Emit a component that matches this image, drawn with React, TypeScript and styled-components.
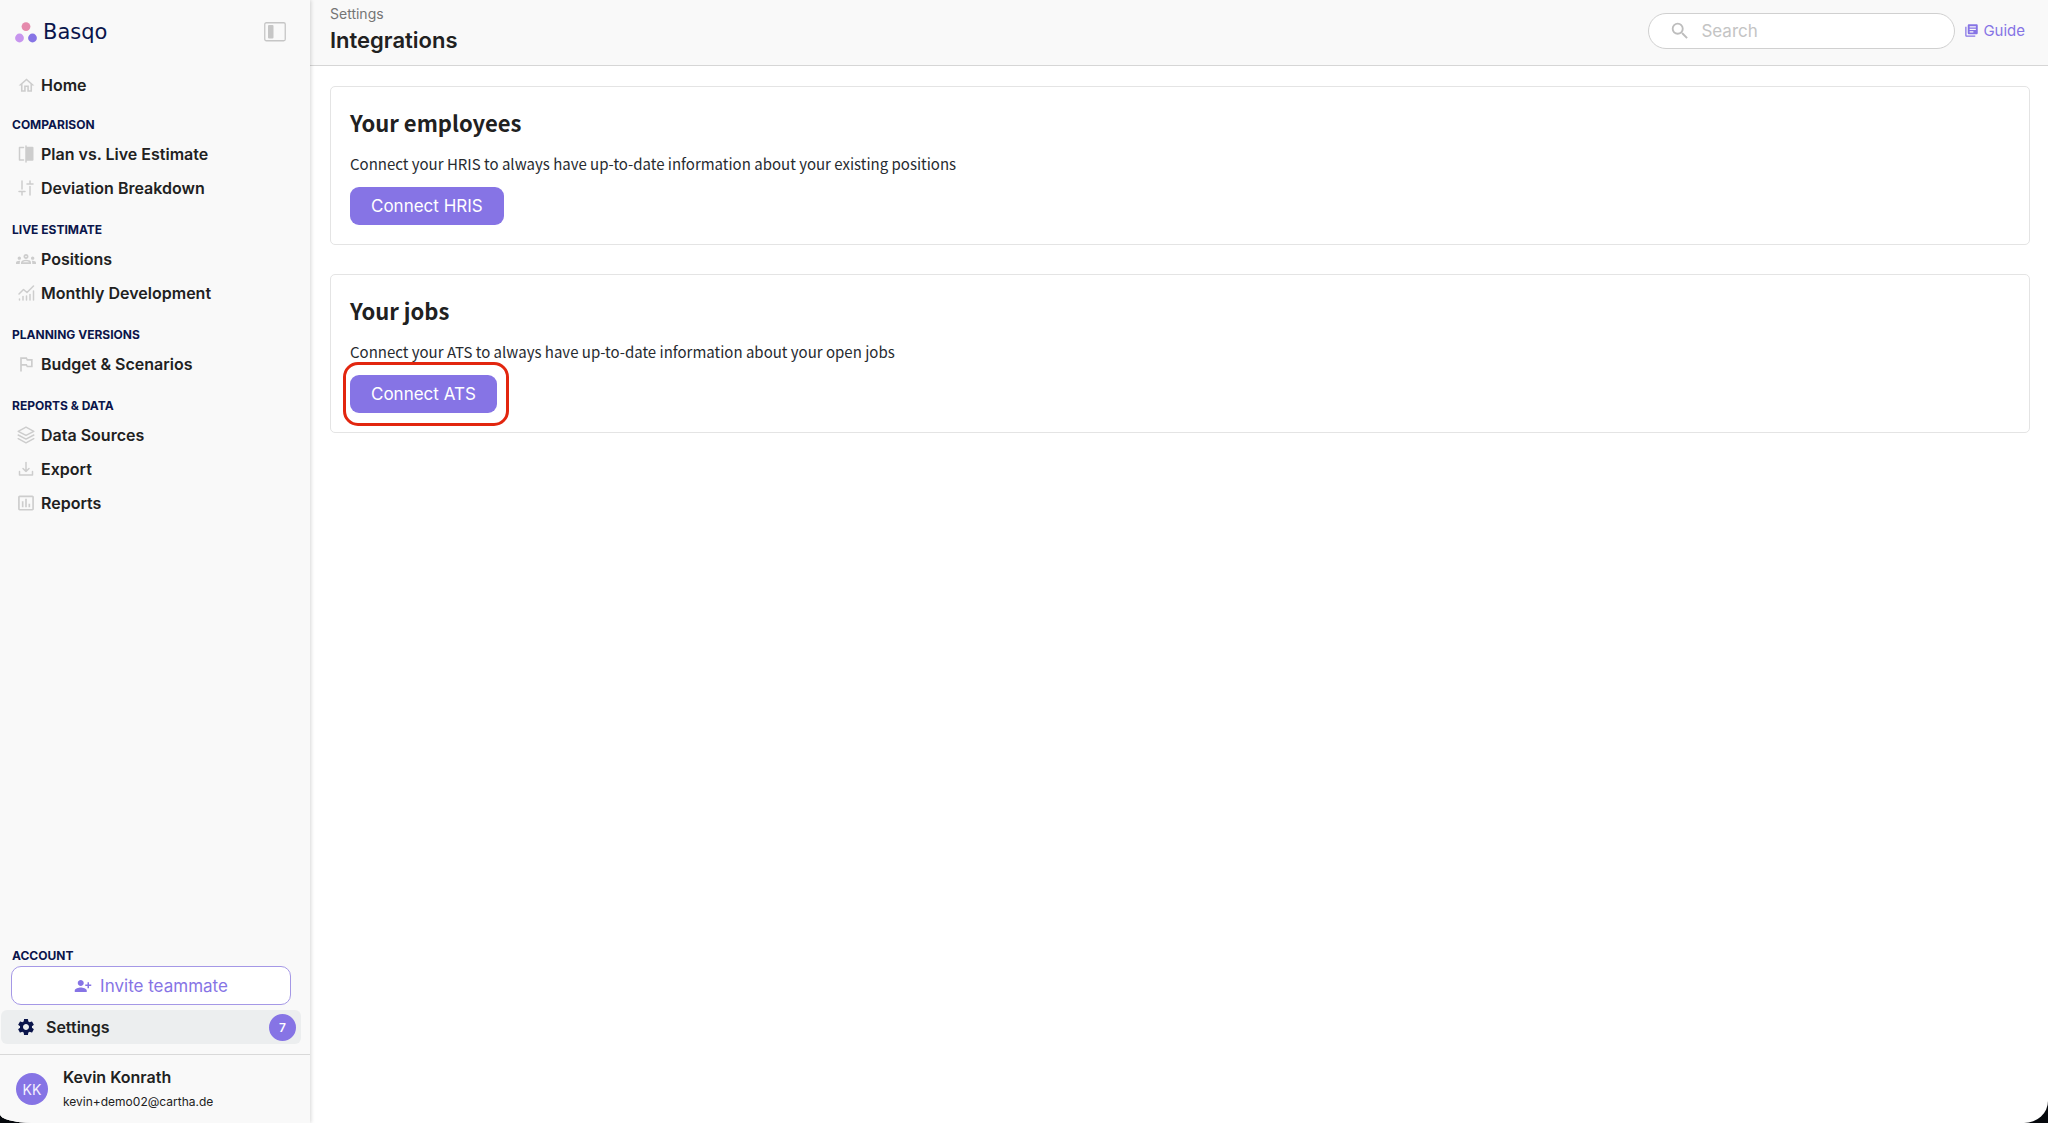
import React from 'react';
import styled, { createGlobalStyle } from 'styled-components';
import {
  MdInsertChartOutlined,
  MdLibraryBooks,
  MdOutlineGroups,
  MdOutlineHome,
  MdOutlinedFlag,
  MdPersonAddAlt1,
  MdSearch,
  MdSettings,
} from 'react-icons/md';

const GlobalStyle = createGlobalStyle`
  *, *::before, *::after { box-sizing: border-box; }
  body {
    margin: 0;
    background: #05080c;
    color: #212121;
    font-family: Inter, "Liberation Sans", sans-serif;
    font-size: 16px;
  }
  h1, h2, p, ul { margin: 0; padding: 0; }
  ul { list-style: none; }
  button, input { font: inherit; }
  a { color: inherit; text-decoration: none; }
`;

const Shell = styled.div`
  display: grid;
  grid-template-columns: 310px 1fr;
  min-height: 100vh;
  background: #fff;
  border-radius: 0 0 24px 32px / 0 0 22px 9px;
  overflow: hidden;
`;

const Sidebar = styled.aside`
  display: flex;
  flex-direction: column;
  background: #f9f9f9;
  box-shadow: 1px 0 4px rgba(0, 0, 0, 0.16);
  z-index: 1;
`;

const Brand = styled.div`
  display: flex;
  align-items: center;
  justify-content: space-between;
  height: 64px;
  padding: 0 24px 0 15px;
`;

const Logo = styled.a`
  display: flex;
  align-items: center;
  gap: 6px;
  color: #0b154b;
  font: 21px/24px "DejaVu Sans", sans-serif;
`;

const IconButton = styled.button`
  display: flex;
  padding: 0;
  border: 0;
  background: none;
  cursor: pointer;
`;

const Nav = styled.nav`
  flex: 1;
  padding-top: 4px;
`;

const Group = styled.section`
  padding-top: 15px;
  &:first-of-type { padding-top: 13px; }
`;

const GroupTitle = styled.h2`
  padding: 0 0 2px 12px;
  color: #0b154b;
  font-size: 12px;
  font-weight: 700;
  line-height: 20px;
`;

const NavLink = styled.a`
  display: flex;
  align-items: center;
  gap: 5px;
  height: 34px;
  padding-left: 16px;
  font-weight: 600;
`;

const NavIcon = styled.span`
  display: flex;
  justify-content: center;
  width: 20px;
  color: #cdcdcd;
  svg { flex: none; }
`;

const Account = styled.section`
  padding: 0 9px 10px 1px;
`;

const AccountTitle = styled(GroupTitle)`
  padding: 0 0 0 11px;
`;

const InviteButton = styled.button`
  display: flex;
  align-items: center;
  justify-content: center;
  gap: 8px;
  width: 280px;
  height: 39px;
  margin: 0 10px 5px;
  border: 1px solid #a598e6;
  border-radius: 10px;
  background: #fff;
  color: #8674e5;
  font-size: 17px;
  cursor: pointer;
`;

const SettingsLink = styled.a`
  display: flex;
  align-items: center;
  gap: 10px;
  height: 34px;
  padding: 0 5px 0 15px;
  border-radius: 6px;
  background: #eceeef;
  font-weight: 600;
  svg { color: #0b154b; }
`;

const Badge = styled.span`
  display: grid;
  place-items: center;
  width: 27px;
  height: 27px;
  margin-left: auto;
  border-radius: 50%;
  background: #8674e5;
  color: #fff;
  font-size: 12px;
`;

const Profile = styled.footer`
  display: flex;
  align-items: center;
  gap: 15px;
  height: 69px;
  padding: 0 16px;
  border-top: 1px solid #d9d9d9;
`;

const Avatar = styled.span`
  display: grid;
  place-items: center;
  width: 32px;
  height: 32px;
  border-radius: 50%;
  background: #8674e5;
  color: #f3f0ff;
  font-size: 14px;
`;

const ProfileText = styled.div`
  display: grid;
  gap: 5px;
`;

const ProfileName = styled.span`
  font-weight: 600;
  line-height: 20px;
`;

const ProfileMail = styled.span`
  font-size: 12px;
  line-height: 20px;
`;

const Main = styled.main`
  min-width: 0;
`;

const TopBar = styled.header`
  display: flex;
  align-items: center;
  justify-content: space-between;
  height: 66px;
  padding: 0 23px 0 20px;
  border-bottom: 1px solid #d6d6d6;
  background: #f9f9f9;
`;

const Crumb = styled.p`
  color: #757575;
  font-size: 14px;
  line-height: 20px;
`;

const PageTitle = styled.h1`
  font-size: 22px;
  font-weight: 600;
  line-height: 32px;
`;

const Heading = styled.div`
  padding-bottom: 6px;
`;

const Tools = styled.div`
  display: flex;
  align-items: center;
  gap: 9px;
  padding-bottom: 4px;
`;

const SearchBox = styled.label`
  display: flex;
  align-items: center;
  gap: 10px;
  width: 307px;
  height: 36px;
  padding: 0 20px;
  border: 1px solid #d0d0d0;
  border-radius: 18px;
  background: #fff;
  color: #bdbdbd;
`;

const SearchInput = styled.input`
  flex: 1;
  min-width: 0;
  padding: 0;
  border: 0;
  outline: 0;
  background: none;
  font-size: 17px;
  &::placeholder { color: #c4c4c4; }
`;

const GuideLink = styled.a`
  display: flex;
  align-items: center;
  gap: 4px;
  color: #8674e5;
  font-size: 15px;
`;

const Content = styled.div`
  display: grid;
  gap: 29px;
  padding: 20px 18px 20px 20px;
`;

const Card = styled.section`
  padding: 18px 19px 19px;
  border: 1px solid #e4e4e4;
  border-radius: 5px;
  font-family: "Noto Sans CJK SC", "Noto Sans", sans-serif;
`;

const CardTitle = styled.h2`
  font-size: 22px;
  font-weight: 700;
  line-height: 34px;
`;

const CardText = styled.p`
  padding: 12px 0 10px;
  color: #272b30;
  font-size: 15px;
  line-height: 26px;
`;

const Marked = styled.div<{ $on?: boolean }>`
  position: relative;
  width: fit-content;
  &::after {
    content: "";
    display: ${(p) => (p.$on ? 'block' : 'none')};
    position: absolute;
    inset: -13px -12px -13px -7px;
    border: 3px solid #e2260f;
    border-radius: 15px;
    pointer-events: none;
  }
`;

const PrimaryButton = styled.button`
  display: block;
  height: 38px;
  padding: 0 21px;
  border: 0;
  border-radius: 9px;
  background: #8674e5;
  color: #fff;
  font-family: Inter, sans-serif;
  font-size: 17px;
  cursor: pointer;
`;

const LogoMark = () => (
  <svg width="22" height="21" viewBox="0 0 22 21" aria-hidden="true">
    <circle cx="11" cy="4.6" r="4.4" fill="#e58aac" />
    <circle cx="4.5" cy="16" r="4.4" fill="#c795ee" />
    <circle cx="17.5" cy="16" r="4.4" fill="#8674e5" />
  </svg>
);

const PanelIcon = () => (
  <svg width="22" height="20" viewBox="0 0 22 20" fill="none" aria-hidden="true">
    <rect x="0.75" y="0.75" width="20.5" height="18" rx="1.5" stroke="#c6c6c6" strokeWidth="1.3" />
    <rect x="4" y="3" width="5.5" height="13.5" rx="1" fill="#c6c6c6" />
  </svg>
);

const strokeProps = {
  fill: 'none',
  stroke: 'currentColor',
  strokeLinecap: 'round' as const,
  strokeLinejoin: 'round' as const,
  'aria-hidden': true,
};

const CompareIcon = () => (
  <svg width="16" height="18" viewBox="0 0 16 18" strokeWidth="1.5" {...strokeProps}>
    <path d="M5.500 2.500H1.500v12.500h4M8 1v16" />
    <path d="M8 1.800h6.500a1 1 0 0 1 1 1v11.900a1 1 0 0 1-1 1H8z" fill="currentColor" stroke="none" />
  </svg>
);

const DeviationIcon = () => (
  <svg width="16" height="16" viewBox="0 0 16 16" strokeWidth="1.5" {...strokeProps}>
    <path d="M4 1v8M1 11.5h6M4 11.5V15M12 15V6.5M9 4h6M12 4V1" />
  </svg>
);

const TrendIcon = () => (
  <svg width="17" height="16" viewBox="0 0 17 16" strokeWidth="1.5" {...strokeProps}>
    <path d="M1 9l4.5-4.500L9 7.500l6.500-6.500M1.500 14v1M5 11.500v3.500M8.500 11v4M12 9.500v5.500M15.500 6v9" />
  </svg>
);

const LayersIcon = () => (
  <svg width="18" height="18" viewBox="0 0 18 18" strokeWidth="1.5" {...strokeProps}>
    <path d="M9 1.200l7.800 4.100L9 9.400 1.200 5.300zM1.200 9L9 13.100 16.800 9M1.200 12.700L9 16.800l7.800-4.100" />
  </svg>
);

const ExportIcon = () => (
  <svg width="16" height="16" viewBox="0 0 16 16" strokeWidth="1.5" {...strokeProps}>
    <path d="M8 1.500v9M5 7.500l3 3 3-3M1.500 10.500V14h13v-3.500" />
  </svg>
);

const groups = [
  {
    title: 'COMPARISON',
    items: [
      { label: 'Plan vs. Live Estimate', icon: <CompareIcon /> },
      { label: 'Deviation Breakdown', icon: <DeviationIcon /> },
    ],
  },
  {
    title: 'LIVE ESTIMATE',
    items: [
      { label: 'Positions', icon: <MdOutlineGroups size={20} /> },
      { label: 'Monthly Development', icon: <TrendIcon /> },
    ],
  },
  {
    title: 'PLANNING VERSIONS',
    items: [{ label: 'Budget & Scenarios', icon: <MdOutlinedFlag size={20} /> }],
  },
  {
    title: 'REPORTS & DATA',
    items: [
      { label: 'Data Sources', icon: <LayersIcon /> },
      { label: 'Export', icon: <ExportIcon /> },
      { label: 'Reports', icon: <MdInsertChartOutlined size={20} /> },
    ],
  },
];

const cards = [
  {
    title: 'Your employees',
    text: 'Connect your HRIS to always have up-to-date information about your existing positions',
    action: 'Connect HRIS',
    marked: false,
  },
  {
    title: 'Your jobs',
    text: 'Connect your ATS to always have up-to-date information about your open jobs',
    action: 'Connect ATS',
    marked: true,
  },
];

export default function App() {
  return (
    <>
      <GlobalStyle />
      <Shell>
        <Sidebar>
          <Brand>
            <Logo href="#">
              <LogoMark />
              Basqo
            </Logo>
            <IconButton type="button" aria-label="Collapse sidebar">
              <PanelIcon />
            </IconButton>
          </Brand>
          <Nav>
            <NavLink href="#">
              <NavIcon><MdOutlineHome size={19} /></NavIcon>
              Home
            </NavLink>
            {groups.map((group) => (
              <Group key={group.title}>
                <GroupTitle>{group.title}</GroupTitle>
                <ul>
                  {group.items.map((item) => (
                    <li key={item.label}>
                      <NavLink href="#">
                        <NavIcon>{item.icon}</NavIcon>
                        {item.label}
                      </NavLink>
                    </li>
                  ))}
                </ul>
              </Group>
            ))}
          </Nav>
          <Account>
            <AccountTitle>ACCOUNT</AccountTitle>
            <InviteButton type="button">
              <MdPersonAddAlt1 size={18} />
              Invite teammate
            </InviteButton>
            <SettingsLink href="#" aria-current="page">
              <MdSettings size={20} />
              Settings
              <Badge>7</Badge>
            </SettingsLink>
          </Account>
          <Profile>
            <Avatar>KK</Avatar>
            <ProfileText>
              <ProfileName>Kevin Konrath</ProfileName>
              <ProfileMail>kevin+demo02@cartha.de</ProfileMail>
            </ProfileText>
          </Profile>
        </Sidebar>
        <Main>
          <TopBar>
            <Heading>
              <Crumb>Settings</Crumb>
              <PageTitle>Integrations</PageTitle>
            </Heading>
            <Tools>
              <SearchBox>
                <MdSearch size={22} />
                <SearchInput type="search" placeholder="Search" aria-label="Search" />
              </SearchBox>
              <GuideLink href="#">
                <MdLibraryBooks size={15} />
                Guide
              </GuideLink>
            </Tools>
          </TopBar>
          <Content>
            {cards.map((card) => (
              <Card key={card.title}>
                <CardTitle>{card.title}</CardTitle>
                <CardText>{card.text}</CardText>
                <Marked $on={card.marked}>
                  <PrimaryButton type="button">{card.action}</PrimaryButton>
                </Marked>
              </Card>
            ))}
          </Content>
        </Main>
      </Shell>
    </>
  );
}
